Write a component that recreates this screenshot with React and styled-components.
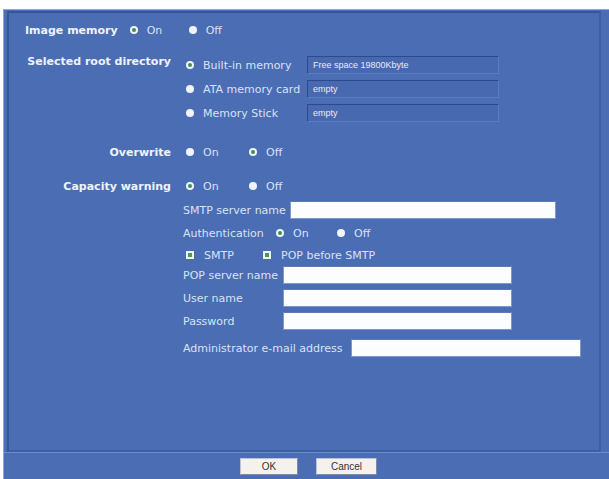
import React from 'react'
import styled, { createGlobalStyle } from 'styled-components'

const GlobalStyle = createGlobalStyle`
html, body {
    margin: 0;
    padding: 0;
    background: #ffffff;
}
body {
    font-family: "DejaVu Sans", Verdana, sans-serif;
    font-size: 11px;
}
`

const Page = styled.div`
margin: 9px 0 0 3px;
height: 470px;
background-color: #4b6db4;
border-top: 1px solid #8fa6d6;
border-left: 1px solid #8fa6d6;
display: flex;
flex-direction: column;
box-sizing: border-box;
`

const Panel = styled.div`
margin: 1px 8px 0 3px;
height: 441px;
box-sizing: border-box;
border: 2px solid #34559c;
border-right-color: #3d5fa6;
border-bottom-color: #3d5fa6;
display: flex;
flex-direction: column;
`

const Row = styled.div`
display: flex;
align-items: center;
height: 18px;
margin-top: ${p => p.$top || 0}px;
padding-left: ${p => p.$indent || 0}px;
`

const Label = styled.div`
width: 176px;
flex-shrink: 0;
text-align: right;
font-weight: bold;
color: #eef2fb;
padding-right: 14px;
box-sizing: border-box;
white-space: nowrap;
align-self: ${p => p.$top ? 'flex-start' : 'center'};
margin-top: ${p => p.$top ? -1 : 0}px;
`

const InlineLabel = styled.span`
font-weight: bold;
color: #eef2fb;
margin-right: 11px;
white-space: nowrap;
`

const Option = styled.label`
display: flex;
align-items: center;
width: ${p => p.$w || 63}px;
color: #d9e2f4;
flex-shrink: 0;
white-space: nowrap;
overflow: hidden;
`

const Dot = styled.span`
width: 8px;
height: 8px;
border-radius: 50%;
background: #f1f5fb;
box-sizing: border-box;
margin-right: 9px;
margin-left: 1px;
flex-shrink: 0;
display: inline-flex;
align-items: center;
justify-content: center;

&::after {
    content: '';
    width: 4px;
    height: 4px;
    border-radius: 50%;
    background: ${p => p.$on ? '#3f8f4a' : 'transparent'};
}
`

const Check = styled.span`
width: 8px;
height: 8px;
background: #eef4ee;
margin-right: 10px;
margin-left: 1px;
flex-shrink: 0;
display: inline-flex;
align-items: center;
justify-content: center;

&::after {
    content: '';
    width: 4px;
    height: 4px;
    background: #4a9a55;
}
`

const InfoBox = styled.div`
width: 192px;
height: 18px;
box-sizing: border-box;
border: 1px solid #2c4a8e;
border-right-color: #5a7cc0;
border-bottom-color: #5a7cc0;
background: #4868b0;
color: #e6ecf8;
font-family: "Liberation Sans", Arial, sans-serif;
font-size: 9px;
padding-left: 5px;
display: flex;
align-items: center;
`

const Field = styled.div`
color: #d9e2f4;
width: ${p => p.$w ? p.$w + 'px' : 'auto'};
margin-right: ${p => p.$w ? 0 : 4}px;
flex-shrink: 0;
white-space: nowrap;
`

const Input = styled.input`
width: ${p => p.$w}px;
height: 18px;
box-sizing: border-box;
border: 1px solid #7f97c9;
border-top-color: #5f7bb5;
background: #fbfdff;
padding: 0 2px;
font-size: 11px;
outline: none;
`

const Sub = styled.div`
display: flex;
align-items: center;
margin-left: -2px;
`

const Footer = styled.div`
flex: 1;
display: flex;
justify-content: center;
align-items: center;
gap: 18px;
padding-left: 4px;
border-top: 1px solid #6f8cc8;
`

const Button = styled.button`
width: ${p => p.$w}px;
height: 17px;
background: #f5f2ee;
border: 1px solid #b9c3d8;
border-right-color: #7d8aa6;
border-bottom-color: #7d8aa6;
font-family: "Liberation Sans", Arial, sans-serif;
font-size: 10px;
color: #333333;
padding: 0;
`

const Radio = ({ on, w, children }) => (
    <Option $w={w}><Dot $on={on} />{children}</Option>
)

const App = () => {
    return (
        <>
            <GlobalStyle />
            <Page>
                <Panel>
                    <Row $top={8} $indent={16}>
                        <InlineLabel>Image memory</InlineLabel>
                        <Radio on w={59}>On</Radio>
                        <Radio>Off</Radio>
                    </Row>

                    <Row $top={17}>
                        <Label $top>Selected root directory</Label>
                        <Radio on w={122}>Built-in memory</Radio>
                        <InfoBox>Free space 19800Kbyte</InfoBox>
                    </Row>
                    <Row $top={6}>
                        <Label />
                        <Radio w={122}>ATA memory card</Radio>
                        <InfoBox>empty</InfoBox>
                    </Row>
                    <Row $top={6}>
                        <Label />
                        <Radio w={122}>Memory Stick</Radio>
                        <InfoBox>empty</InfoBox>
                    </Row>

                    <Row $top={21}>
                        <Label>Overwrite</Label>
                        <Radio>On</Radio>
                        <Radio on>Off</Radio>
                    </Row>

                    <Row $top={16}>
                        <Label>Capacity warning</Label>
                        <Radio on>On</Radio>
                        <Radio>Off</Radio>
                    </Row>

                    <Row $top={6}>
                        <Label />
                        <Sub>
                            <Field>SMTP server name</Field>
                            <Input $w={266} />
                        </Sub>
                    </Row>
                    <Row $top={5}>
                        <Label />
                        <Sub>
                            <Field $w={92}>Authentication</Field>
                            <Radio on w={61}>On</Radio>
                            <Radio>Off</Radio>
                        </Sub>
                    </Row>
                    <Row $top={4}>
                        <Label />
                        <Option $w={77}><Check />SMTP</Option>
                        <Option $w={140}><Check />POP before SMTP</Option>
                    </Row>
                    <Row $top={2}>
                        <Label />
                        <Sub>
                            <Field $w={100}>POP server name</Field>
                            <Input $w={229} />
                        </Sub>
                    </Row>
                    <Row $top={5}>
                        <Label />
                        <Sub>
                            <Field $w={100}>User name</Field>
                            <Input $w={229} />
                        </Sub>
                    </Row>
                    <Row $top={5}>
                        <Label />
                        <Sub>
                            <Field $w={100}>Password</Field>
                            <Input $w={229} type="password" />
                        </Sub>
                    </Row>
                    <Row $top={9}>
                        <Label />
                        <Sub>
                            <Field $w={168}>Administrator e-mail address</Field>
                            <Input $w={230} />
                        </Sub>
                    </Row>
                </Panel>
                <Footer>
                    <Button $w={58}>OK</Button>
                    <Button $w={61}>Cancel</Button>
                </Footer>
            </Page>
        </>
    )
}

export default App
